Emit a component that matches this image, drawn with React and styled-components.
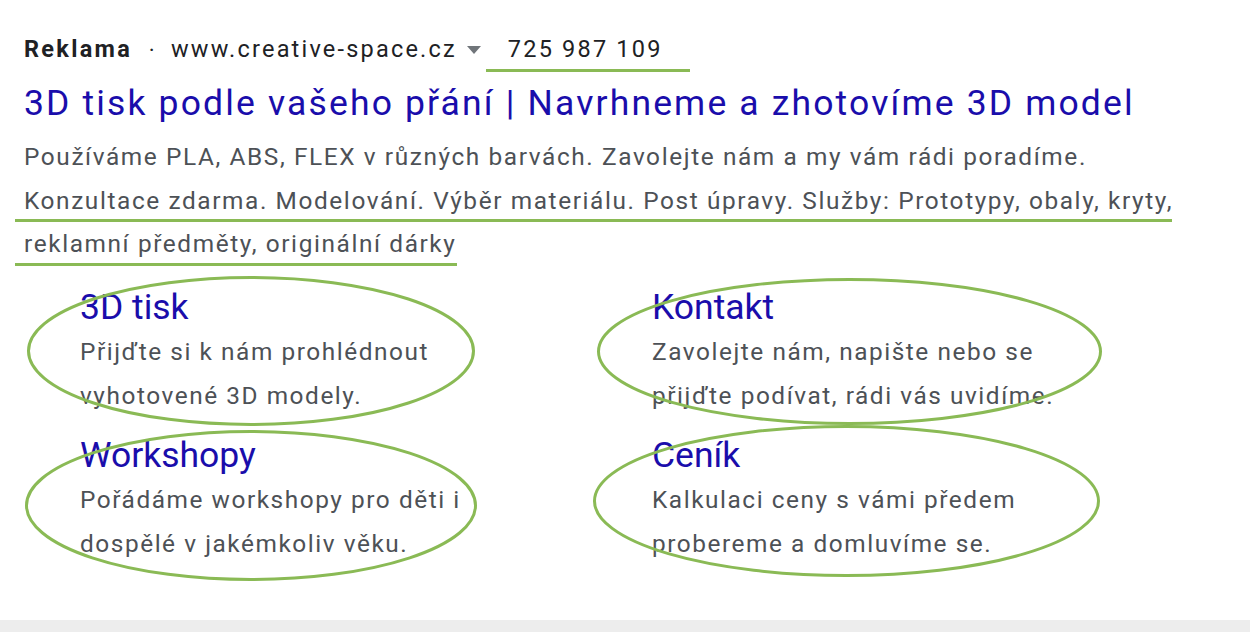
import React from "react";
import styled, { createGlobalStyle } from "styled-components";

const GlobalStyle = createGlobalStyle`
  html, body {
    margin: 0;
    padding: 0;
    background: #ededed;
  }
  body {
    font-family: Roboto, "Noto Sans", Arial, sans-serif;
  }
`;

const MARK = "#8aba55";

const Card = styled.div`
  height: 620px;
  background: #ffffff;
  box-shadow: 0 1px 1px rgba(0, 0, 0, 0.35), 0 2px 5px rgba(0, 0, 0, 0.12);
  padding: 34px 0 0 24px;
  box-sizing: border-box;
  overflow: hidden;
`;

const AdLine = styled.div`
  display: flex;
  align-items: center;
  height: 30px;
  font-size: 23.5px;
  letter-spacing: 2.2px;
  color: #202124;
  white-space: nowrap;
`;

const AdLabel = styled.span`
  font-weight: 700;
  letter-spacing: 2.3px;
`;

const Dot = styled.span`
  margin: 0 17px 0 17px;
  font-weight: 700;
  font-size: 16px;
  letter-spacing: 0;
`;

const Caret = styled.span`
  width: 0;
  height: 0;
  margin: 2px 0 0 10px;
  border-left: 7px solid transparent;
  border-right: 7px solid transparent;
  border-top: 8px solid #70757a;
`;

const Phone = styled.span`
  position: relative;
  margin-left: 27px;
`;

const Mark = styled.span`
  position: absolute;
  left: ${(p) => p.$left}px;
  width: ${(p) => p.$width}px;
  bottom: ${(p) => p.$bottom}px;
  height: 3px;
  background: ${MARK};
`;

const Headline = styled.div`
  margin-top: 15px;
  font-size: 35.5px;
  letter-spacing: 2.15px;
  line-height: 48px;
  color: #1a0dab;
  white-space: nowrap;
`;

const Description = styled.div`
  margin-top: 8px;
  font-size: 24.4px;
  letter-spacing: 1.6px;
  line-height: 43.5px;
  color: #4d5156;
`;

const DescLine = styled.div`
  position: relative;
  white-space: nowrap;
`;

const Sitelinks = styled.div`
  display: grid;
  grid-template-columns: 572px 1fr;
  row-gap: 14px;
  margin: 18px 0 0 56px;
`;

const Sitelink = styled.div`
  position: relative;
`;

const SiteTitle = styled.div`
  font-size: 35.5px;
  line-height: 46px;
  color: #1a0dab;
`;

const SiteDesc = styled.div`
  font-size: 24.4px;
  letter-spacing: 1.55px;
  line-height: 44px;
  color: #4d5156;
  white-space: nowrap;
`;

const Ring = styled.svg`
  position: absolute;
  left: ${(p) => p.$x}px;
  top: ${(p) => p.$y}px;
  overflow: visible;
  pointer-events: none;
`;

const sitelinks = [
  {
    title: "3D tisk",
    lines: ["Přijďte si k nám prohlédnout", "vyhotovené 3D modely."],
    ring: { x: -53, y: -8, w: 448, h: 150 },
  },
  {
    title: "Kontakt",
    lines: ["Zavolejte nám, napište nebo se", "přijďte podívat, rádi vás uvidíme."],
    ring: { x: -55, y: -6, w: 505, h: 147 },
  },
  {
    title: "Workshopy",
    lines: ["Pořádáme workshopy pro děti i", "dospělé v jakémkoliv věku."],
    ring: { x: -55, y: -2, w: 452, h: 151 },
  },
  {
    title: "Ceník",
    lines: ["Kalkulaci ceny s vámi předem", "probereme a domluvíme se."],
    ring: { x: -59, y: -7, w: 507, h: 152 },
  },
];

const App = () => {
  return (
    <>
      <GlobalStyle />
      <Card>
        <AdLine>
          <AdLabel>Reklama</AdLabel>
          <Dot>·</Dot>
          <span>www.creative-space.cz</span>
          <Caret />
          <Phone>
            725 987 109
            <Mark $left={-22} $width={204} $bottom={-9} />
          </Phone>
        </AdLine>
        <Headline>
          3D tisk podle vašeho přání | Navrhneme a zhotovíme 3D model
        </Headline>
        <Description>
          <DescLine>
            Používáme PLA, ABS, FLEX v různých barvách. Zavolejte nám a my vám
            rádi poradíme.
          </DescLine>
          <DescLine>
            Konzultace zdarma. Modelování. Výběr materiálu. Post úpravy. Služby:
            Prototypy, obaly, kryty,
            <Mark $left={-9} $width={1157} $bottom={0} />
          </DescLine>
          <DescLine>
            reklamní předměty, originální dárky
            <Mark $left={-9} $width={442} $bottom={0} />
          </DescLine>
        </Description>
        <Sitelinks>
          {sitelinks.map((s) => (
            <Sitelink key={s.title}>
              <SiteTitle>{s.title}</SiteTitle>
              {s.lines.map((l) => (
                <SiteDesc key={l}>{l}</SiteDesc>
              ))}
              <Ring
                $x={s.ring.x}
                $y={s.ring.y}
                width={s.ring.w}
                height={s.ring.h}
                viewBox={`0 0 ${s.ring.w} ${s.ring.h}`}
              >
                <ellipse
                  cx={s.ring.w / 2}
                  cy={s.ring.h / 2}
                  rx={s.ring.w / 2 - 1.5}
                  ry={s.ring.h / 2 - 1.5}
                  fill="none"
                  stroke={MARK}
                  strokeWidth="3"
                />
              </Ring>
            </Sitelink>
          ))}
        </Sitelinks>
      </Card>
    </>
  );
};

export default App;
